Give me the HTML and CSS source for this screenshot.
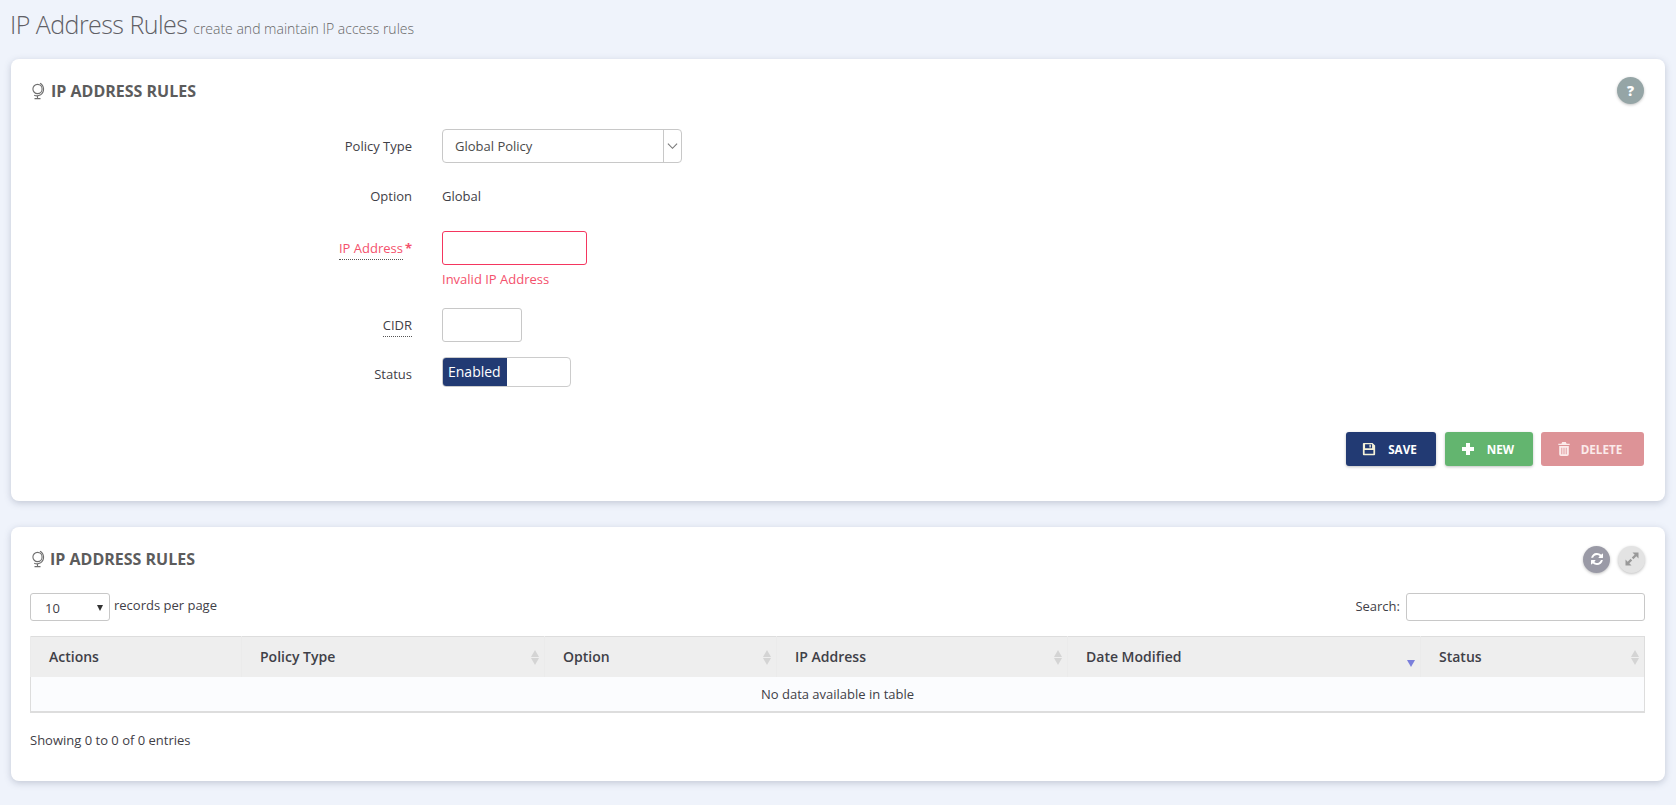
FILE: index.html
```html
<!DOCTYPE html>
<html lang="en">
<head>
<meta charset="utf-8">
<title>IP Address Rules</title>
<link rel="stylesheet" href="styles.css">
</head>
<body>
<header class="page-head">
  <h1 class="page-title">IP Address Rules <small class="page-sub">create and maintain IP access rules</small></h1>
</header>

<section class="card card-form">
  <div class="card-head">
    <h2 class="card-title title-first">
      <svg class="globe" viewBox="0 0 16 18" aria-hidden="true"><circle cx="7.500" cy="7" r="4.600"/><path d="M10 1.200a6.800 6.800 0 0 1 .6 11.600 6.800 6.800 0 0 1-6.400.4M7.500 13.800v2.400M4.500 16.600h6"/></svg>
      IP ADDRESS RULES
    </h2>
    <div class="tools tools-first">
      <span class="round round-help">?</span>
    </div>
  </div>

  <form class="form">
    <div class="row row-policy">
      <label class="lbl">Policy Type</label>
      <div class="select">
        <span class="select-val">Global Policy</span>
        <span class="select-arrow"><svg viewBox="0 0 12 8" aria-hidden="true"><path d="M1 1.500l5 5 5-5"/></svg></span>
      </div>
    </div>
    <div class="row row-option">
      <label class="lbl">Option</label>
      <span class="static">Global</span>
    </div>
    <div class="row row-ip">
      <label class="lbl lbl-err"><span class="dotted">IP Address</span><span class="req">*</span></label>
      <div class="field">
        <input class="input input-err" type="text">
        <div class="err-msg">Invalid IP Address</div>
      </div>
    </div>
    <div class="row row-cidr">
      <label class="lbl"><span class="dotted">CIDR</span></label>
      <input class="input input-cidr" type="text">
    </div>
    <div class="row row-status">
      <label class="lbl lbl-status">Status</label>
      <div class="switch"><span class="switch-on">Enabled</span></div>
    </div>
  </form>

  <div class="actions">
    <button class="btn btn-save" type="button">
      <svg class="btn-icon" viewBox="0 0 16 16" aria-hidden="true"><path fill-rule="evenodd" d="M2 1h10l3 3v10a1 1 0 0 1-1 1H2a1 1 0 0 1-1-1V2a1 1 0 0 1 1-1zm1.500 1.500v4.500h8V2.500zM3 9v4.500h10V9zM8.500 3.200h1.600v3H8.500z"/></svg>
      <span>SAVE</span>
    </button>
    <button class="btn btn-new" type="button">
      <svg class="btn-icon" viewBox="0 0 14 14" aria-hidden="true"><path d="M5 1h4v4h4v4H9v4H5V9H1V5h4z"/></svg>
      <span>NEW</span>
    </button>
    <button class="btn btn-del" type="button">
      <svg class="btn-icon" viewBox="0 0 14 16" aria-hidden="true"><path fill-rule="evenodd" d="M5 0h4l1 2h3.500v1.500H.5V2H4zM1.500 4.500h11V14a2 2 0 0 1-2 2h-7a2 2 0 0 1-2-2zM4 6.500V14h1V6.500zm2.500 0V14h1V6.500zm2.500 0V14h1V6.500z"/></svg>
      <span>DELETE</span>
    </button>
  </div>
</section>

<section class="card card-table">
  <div class="card-head card-head-2">
    <h2 class="card-title title-second">
      <svg class="globe" viewBox="0 0 16 18" aria-hidden="true"><circle cx="7.500" cy="7" r="4.600"/><path d="M10 1.200a6.800 6.800 0 0 1 .6 11.600 6.800 6.800 0 0 1-6.400.4M7.500 13.800v2.400M4.500 16.600h6"/></svg>
      IP ADDRESS RULES
    </h2>
    <div class="tools">
      <span class="round round-refresh"><svg viewBox="0 0 1536 1536" aria-hidden="true"><path d="M1511 928q0 5-1 7-64 268-268 434.500T764 1536q-146 0-282.500-55T238 1324l-129 129q-19 19-45 19t-45-19-19-45V960q0-26 19-45t45-19h448q26 0 45 19t19 45-19 45L420 1142q71 66 161 102t187 36q134 0 250-65t186-179q11-17 53-117 8-23 30-23h192q13 0 22.500 9.500T1511 928zM1536 128v448q0 26-19 45t-45 19h-448q-26 0-45-19t-19-45 19-45l138-138q-148-137-349-137-134 0-250 65T332 480q-11 17-53 117-8 23-30 23H50q-13 0-22.500-9.500T18 588v-7q65-268 270-434.500T768 0q146 0 284 55.500T1297 212l130-129q19-19 45-19t45 19 19 45z"/></svg></span>
      <span class="round round-expand"><svg viewBox="0 0 14 14" aria-hidden="true"><path d="M7.500 0.500H13.500V6.500L11.300 4.300 8.400 7.200 6.800 5.600 9.700 2.700zM6.500 13.500H0.500V7.500L2.700 9.700 5.600 6.800 7.200 8.400 4.300 11.300z"/></svg></span>
    </div>
  </div>

  <div class="dt-top">
    <div class="dt-len">
      <div class="len-select"><span>10</span><i class="len-arrow"></i></div>
      <span class="len-text">records per page</span>
    </div>
    <div class="dt-search">
      <label class="search-lbl">Search:</label>
      <input class="input input-search" type="text">
    </div>
  </div>

  <table class="table">
    <thead>
      <tr>
        <th class="c-actions">Actions</th>
        <th class="c-policy sort">Policy Type</th>
        <th class="c-option sort">Option</th>
        <th class="c-ip sort">IP Address</th>
        <th class="c-date sort-desc">Date Modified</th>
        <th class="c-status sort">Status</th>
      </tr>
    </thead>
    <tbody>
      <tr><td class="empty" colspan="6">No data available in table</td></tr>
    </tbody>
  </table>

  <div class="dt-info">Showing 0 to 0 of 0 entries</div>
</section>
</body>
</html>
```
FILE: styles.css
```css
* { box-sizing: border-box; }
html, body { height: 100%; }
body {
  margin: 0;
  padding: 0 11px;
  background: #eff3fb;
  font-family: "Open Sans", "Liberation Sans", sans-serif;
  font-size: 13px;
  color: #3f4047;
  overflow: hidden;
}
.page-head { height: 59px; padding-top: 7px; margin-left: -1px; }
.page-title {
  margin: 0;
  font-size: 25px;
  font-weight: 300;
  line-height: 34px;
  color: #5f5f66;
  letter-spacing: -0.55px;
}
.page-sub {
  font-size: 14px;
  font-weight: 300;
  color: #666;
  letter-spacing: 0;
}
.card {
  background: #fff;
  border-radius: 8px;
  box-shadow: 0 2px 7px rgba(80, 90, 120, .28);
  padding: 0 20px;
}
.card-form { height: 442px; margin-bottom: 26px; }
.card-table { height: 254px; padding-left: 19px; }
.card-head {
  height: 63px;
  display: flex;
  align-items: center;
  justify-content: space-between;
}
.card-head-2 { height: 63px; padding-top: 1px; margin-bottom: 3px; }
.card-title {
  margin: 0;
  display: flex;
  align-items: center;
  font-size: 16px;
  font-weight: 700;
  color: #5c5c5c;
}
.title-first { gap: 5px; margin-left: -1px; }
.title-second { gap: 4px; }
.globe {
  width: 16px;
  height: 18px;
  fill: none;
  stroke: #6f6f6f;
  stroke-width: 1.1;
}
.tools { display: flex; gap: 8px; }
.tools-first { margin-right: 1px; }
.round {
  width: 27px;
  height: 27px;
  border-radius: 50%;
  display: flex;
  align-items: center;
  justify-content: center;
  box-shadow: 0 1px 3px rgba(0, 0, 0, .25);
  color: #fff;
}
.round svg { width: 12px; height: 12px; }
.round-help { background: #95a5a6; font-weight: 800; font-size: 14px; }
.round-refresh { background: #9a9aa6; fill: #fff; }
.round-expand { background: #e3e3e3; fill: #999; }
.round-expand svg { width: 14px; height: 14px; }

.form { display: flex; flex-direction: column; }
.row {
  display: grid;
  grid-template-columns: 381px auto;
  column-gap: 30px;
  justify-items: start;
  align-items: center;
}
.row-policy { margin-top: 7px; height: 34px; }
.row-option { margin-top: 16px; height: 34px; }
.row-ip { margin-top: 18px; align-items: start; }
.row-ip .lbl { line-height: 35px; }
.row-cidr { margin-top: 20px; }
.row-status { margin-top: 15px; }
.lbl {
  justify-self: end;
  color: #3f4047;
  font-size: 13px;
}
.lbl-err { color: #f4516c; }
.lbl-status { position: relative; top: 2px; }
.dotted { border-bottom: 1px dotted #555; padding-bottom: 2px; }
.req { color: #f4516c; font-weight: 700; margin-left: 2px; }
.static { color: #3f4047; }
.select {
  width: 240px;
  height: 34px;
  border: 1px solid #c8c8c8;
  border-radius: 4px;
  display: flex;
  align-items: stretch;
}
.select-val { flex: 1; padding-left: 12px; line-height: 32px; color: #4a4a4a; }
.select-arrow {
  width: 18px;
  border-left: 1px solid #c8c8c8;
  display: flex;
  align-items: center;
  justify-content: center;
}
.select-arrow svg { width: 11px; height: 8px; fill: none; stroke: #777; stroke-width: 1.2; }
.input {
  display: block;
  border: 1px solid #c8c8c8;
  border-radius: 3px;
  background: #fff;
  outline: none;
  padding: 0 8px;
}
.input-err { width: 145px; height: 34px; border-color: #f4365f; }
.err-msg { color: #f4516c; font-size: 13px; margin-top: 5px; line-height: 18px; }
.input-cidr { width: 80px; height: 34px; }
.switch {
  width: 129px;
  height: 30px;
  border: 1px solid #ccc;
  border-radius: 4px;
  overflow: hidden;
}
.switch-on {
  display: block;
  width: 64px;
  height: 100%;
  background: #223a73;
  color: #fff;
  font-size: 14px;
  line-height: 28px;
  padding-left: 5px;
}
.actions {
  display: flex;
  justify-content: flex-end;
  gap: 8px;
  margin-top: 45px;
  padding-right: 1px;
}
.btn {
  height: 34px;
  border: 0;
  border-radius: 3px;
  display: flex;
  align-items: center;
  justify-content: center;
  gap: 12px;
  font-family: inherit;
  font-size: 11.700px;
  font-weight: 700;
  color: #fff;
  box-shadow: 0 1px 3px rgba(0, 0, 0, .25);
  padding: 0 3px 0 0;
}
.btn-icon { width: 14px; height: 14px; fill: currentColor; }
.btn-save { width: 90px; margin-right: 1px; background: #223a73; }
.btn-save .btn-icon { fill: #f4f1d8; }
.btn-new { width: 88px; background: #63b56f; }
.btn-del { width: 103px; background: #dd9397; box-shadow: none; color: #fbeaea; gap: 10px; padding-right: 6px; }

.dt-top {
  display: flex;
  justify-content: space-between;
  align-items: flex-start;
}
.dt-len { display: flex; align-items: flex-start; gap: 4px; }
.len-select {
  width: 80px;
  height: 28px;
  border: 1px solid #c8c8c8;
  border-radius: 3px;
  display: flex;
  align-items: center;
  justify-content: space-between;
  padding: 2px 6px 0 14px;
}
.len-arrow {
  width: 0;
  height: 0;
  border-left: 3.500px solid transparent;
  border-right: 3.500px solid transparent;
  border-top: 6px solid #333;
}
.len-text { line-height: 24px; }
.dt-search { display: flex; align-items: flex-start; gap: 6px; }
.search-lbl { line-height: 26px; }
.input-search { width: 239px; height: 28px; }

.table {
  width: 100%;
  margin-top: 15px;
  border-collapse: collapse;
  table-layout: fixed;
  border: 1px solid #ddd;
  border-bottom-width: 2px;
}
.table th {
  height: 40px;
  background: #eee;
  text-align: left;
  padding: 0 18px;
  font-size: 14px;
  font-weight: 600;
  color: #3f4047;
  border-left: 1px solid #ebebeb;
  position: relative;
}
.c-actions { width: 211px; }
.c-policy { width: 303px; }
.c-option { width: 232px; }
.c-ip { width: 291px; }
.c-date { width: 353px; }
.sort::before, .sort::after, .sort-desc::after {
  content: "";
  position: absolute;
  right: 5px;
  width: 0;
  height: 0;
  border-left: 4px solid transparent;
  border-right: 4px solid transparent;
}
.sort::before { top: 13px; border-bottom: 7px solid #d4d4d4; }
.sort::after { top: 21px; border-top: 7px solid #d4d4d4; }
.sort-desc::after { top: 23px; border-top: 7px solid #7a7fdb; }
.empty {
  height: 35px;
  background: #fbfcfe;
  text-align: center;
  color: #3f4047;
  padding: 0;
}
.dt-info { margin-top: 18px; line-height: 18px; color: #3f4047; }
```
